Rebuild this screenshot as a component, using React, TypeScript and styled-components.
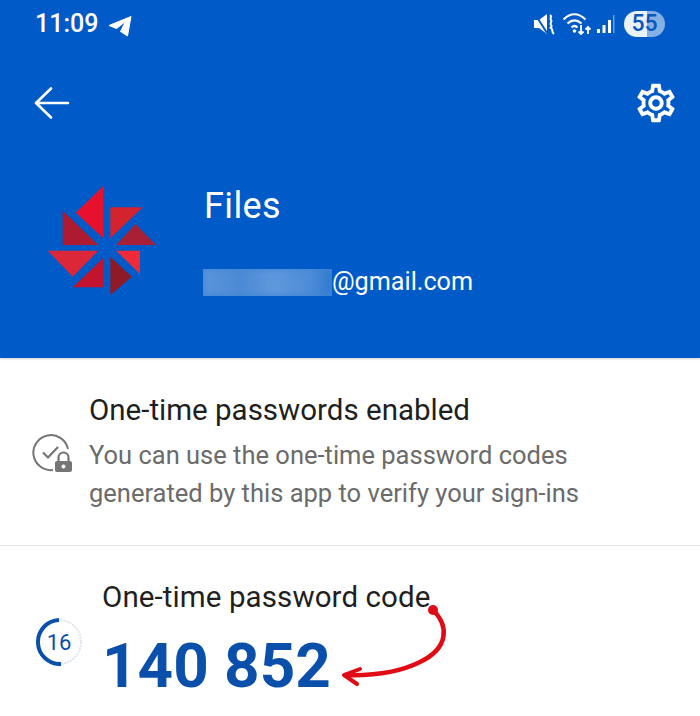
import styled, { createGlobalStyle } from "styled-components";
import { MdOutlineSettings } from "react-icons/md";

const Global = createGlobalStyle`
  html, body {
    margin: 0;
    padding: 0;
    background: #fff;
  }
  body {
    font-family: Roboto, "Noto Sans", sans-serif;
    overflow: hidden;
  }
`;

const Screen = styled.div`
  position: relative;
  width: 700px;
  height: 716px;
  overflow: hidden;
  background: #fff;
`;

const Header = styled.header`
  height: 358px;
  background: #005ac8;
  color: #fff;
  box-shadow: 0 1px 2px rgba(0, 0, 0, 0.2);
  display: flex;
  flex-direction: column;
`;

const StatusBar = styled.div`
  display: flex;
  align-items: center;
  justify-content: space-between;
  height: 48px;
  padding: 0 35px 0 35px;
`;

const StatusGroup = styled.div`
  display: flex;
  align-items: center;
  gap: ${(p: { $gap: number }) => p.$gap}px;
`;

const Clock = styled.span`
  font-size: 25px;
  font-weight: 500;
  line-height: 48px;
`;

const Battery = styled.div`
  width: 41px;
  height: 26px;
  border-radius: 13px;
  background: linear-gradient(90deg, #e9f1fb 0 55%, #84b0e6 55% 100%);
  color: #0b58bd;
  font-size: 23px;
  font-weight: 500;
  line-height: 26px;
  text-align: center;
`;

const Toolbar = styled.div`
  display: flex;
  align-items: center;
  justify-content: space-between;
  height: 44px;
  margin-top: 33px;
  padding: 0 21px 0 34px;
`;

const Account = styled.div`
  display: flex;
  align-items: flex-start;
  margin-top: 58px;
  padding-left: 47px;
`;

const Names = styled.div`
  margin-left: 44px;
  display: flex;
  flex-direction: column;
`;

const AppName = styled.div`
  font-size: 36px;
  line-height: 40px;
  margin: 3px 0 0 1px;
  letter-spacing: 0.4px;
`;

const Email = styled.div`
  display: flex;
  align-items: center;
  margin-top: 42px;
  font-size: 25.2px;
  line-height: 28px;
`;

const Redacted = styled.div`
  width: 129px;
  height: 27px;
  overflow: hidden;
  background: #3f84d4;
`;

const Smear = styled.div`
  width: 100%;
  height: 100%;
  background: linear-gradient(
    90deg,
    #5a94da 0%,
    #4b8ad6 30%,
    #5f98dc 55%,
    #4b8bd7 85%,
    #2f78cf 100%
  );
  filter: blur(3px);
`;

const Section = styled.section`
  display: flex;
  align-items: center;
  box-sizing: border-box;
  padding-left: ${(p: { $inset: number }) => p.$inset}px;
`;

const StatusSection = styled(Section)`
  height: 188px;
  border-bottom: 1px solid #e2e2e2;
`;

const CodeSection = styled(Section)`
  height: 170px;
  align-items: flex-start;
`;

const Texts = styled.div`
  display: flex;
  flex-direction: column;
`;

const StatusTexts = styled(Texts)`
  margin-left: 13px;
`;

const Title = styled.div`
  font-size: 29.5px;
  line-height: 36px;
  color: #1f1f1f;
`;

const CodeTitle = styled(Title)`
  letter-spacing: 0.1px;
`;

const Description = styled.div`
  margin-top: 8px;
  font-size: 25.5px;
  line-height: 38px;
  color: #6b6b6b;
`;

const Timer = styled.div`
  position: relative;
  width: 48px;
  height: 48px;
  margin-top: 72px;
  flex: none;
`;

const TimerValue = styled.span`
  position: absolute;
  inset: 0;
  display: flex;
  align-items: center;
  justify-content: center;
  color: #0a50ab;
  font-size: 22px;
`;

const CodeTexts = styled(Texts)`
  margin-left: 19px;
  padding-top: 33px;
`;

const Code = styled.div`
  margin-top: 15px;
  font-size: 62px;
  line-height: 72px;
  font-weight: 700;
  color: #0a50ab;
`;

const Annotation = styled.svg`
  position: absolute;
  left: 0;
  top: 0;
  pointer-events: none;
`;

function Pinwheel() {
  const blades: [string, string][] = [
    ["56.3,3 56.3,55.3 28.7,29.7", "#e8112d"],
    ["63.3,24.3 95.7,24.3 63.3,55.3", "#d2232f"],
    ["88.3,41 109,62 69,62", "#a82035"],
    ["69,67.7 93,67.7 93,91", "#ef2b3a"],
    ["63.3,73.7 84.7,93.7 63.3,112", "#8f1a26"],
    ["57,74.3 57,104.3 25.7,104.3", "#c2142f"],
    ["0.7,67.7 51.3,67.7 25.7,93.7", "#dc2738"],
    ["15.7,27.7 51.3,62 15.7,62", "#ae1a30"],
  ];
  return (
    <svg width="112" height="116" viewBox="0 0 112 116">
      {blades.map(([points, fill]) => (
        <polygon key={points} points={points} fill={fill} />
      ))}
    </svg>
  );
}

export default function App() {
  return (
    <Screen>
      <Global />
      <Header>
        <StatusBar>
          <StatusGroup $gap={10}>
            <Clock>11:09</Clock>
            <svg width="24" height="28" viewBox="0 0 24 28">
              <path
                d="M1 15.500 23 6.500 19.500 26 12.500 21.500 17.500 11.500 8.500 18.500Z"
                fill="#fff"
                stroke="#fff"
                strokeLinejoin="round"
              />
            </svg>
          </StatusGroup>
          <StatusGroup $gap={6}>
            <svg width="23" height="22" viewBox="0 0 23 22" fill="none">
              <path d="M0 7h5l8-6v20l-8-6H0Z" fill="#fff" />
              <path d="M1 1l12 19" stroke="#005ac8" strokeWidth="2" />
              <path
                d="M16 2c3 2-1 3 1 5s-2 3 0 5-2 3 0 3 0 4 3 6"
                stroke="#fff"
                strokeWidth="2"
              />
            </svg>
            <svg width="28" height="22" viewBox="0 0 28 22" fill="none">
              <path
                d="M0.500 6.500c7-7 15-7 22 0M4.500 10.500c4.500-4 9.500-4 14 0M8.500 14.500c2-2 4-2 6 0"
                stroke="#fff"
                strokeWidth="2.200"
              />
              <circle cx="11.500" cy="18" r="1.800" fill="#fff" />
              <path
                d="M18 12v9m-2.500-2.500L18 21l2.500-2.500M25 21v-7m-2.500 2.500L25 14l2.500 2.500"
                stroke="#fff"
                strokeWidth="1.800"
              />
            </svg>
            <svg width="21" height="20" viewBox="0 0 21 20">
              <rect x="0" y="15" width="3" height="4" fill="#fff" />
              <rect x="5.500" y="11" width="3" height="8" fill="#fff" />
              <rect x="11" y="6" width="3" height="13" fill="#fff" />
              <rect x="16" y="1" width="1.500" height="18" fill="#6b9fe0" />
            </svg>
            <Battery>55</Battery>
          </StatusGroup>
        </StatusBar>
        <Toolbar>
          <svg width="36" height="32" viewBox="0 0 36 32" fill="none">
            <path
              d="M34 16H2M17 1.500 2 16l15 14.500"
              stroke="#fff"
              strokeWidth="2.600"
              strokeLinecap="round"
              strokeLinejoin="round"
            />
          </svg>
          <MdOutlineSettings size={46} color="#fff" />
        </Toolbar>
        <Account>
          <Pinwheel />
          <Names>
            <AppName>Files</AppName>
            <Email>
              <Redacted>
                <Smear />
              </Redacted>
              @gmail.com
            </Email>
          </Names>
        </Account>
      </Header>
      <StatusSection $inset={32}>
        <svg width="44" height="40" viewBox="0 0 44 40" fill="none">
          <path d="M21 38A17.500 17.500 0 1 1 36 17" stroke="#757575" strokeWidth="2" />
          <path d="M11 20.500l5 5 10-10.500" stroke="#757575" strokeWidth="2.200" />
          <path d="M26.500 29v-3.500a5 5 0 0 1 10 0V29" stroke="#757575" strokeWidth="2.200" />
          <rect x="23" y="29" width="17" height="11" rx="2" fill="#757575" />
          <circle cx="31.500" cy="34.500" r="2" fill="#fff" />
        </svg>
        <StatusTexts>
          <Title>One-time passwords enabled</Title>
          <Description>
            You can use the one-time password codes
            <br />
            generated by this app to verify your sign-ins
          </Description>
        </StatusTexts>
      </StatusSection>
      <CodeSection $inset={35}>
        <Timer>
          <svg width="48" height="48" viewBox="0 0 48 48" fill="none">
            <circle cx="24" cy="24" r="22" stroke="#dfe5ee" strokeWidth="2" strokeDasharray="2 1" />
            <path d="M24 2A22 22 0 1 0 26 46" stroke="#0a50ab" strokeWidth="4" />
          </svg>
          <TimerValue>16</TimerValue>
        </Timer>
        <CodeTexts>
          <CodeTitle>One-time password code</CodeTitle>
          <Code>140 852</Code>
        </CodeTexts>
      </CodeSection>
      <Annotation width="700" height="716" viewBox="0 0 700 716" fill="none">
        <path
          d="M433 610C449 626 449 648 420 662 400 672 375 676 345 675"
          stroke="#e00b14"
          strokeWidth="4.500"
          strokeLinecap="round"
        />
        <path
          d="M360 669 344 675 357 684"
          stroke="#e00b14"
          strokeWidth="4"
          strokeLinecap="round"
          strokeLinejoin="round"
        />
        <circle cx="433" cy="610" r="5" fill="#e00b14" />
      </Annotation>
    </Screen>
  );
}
